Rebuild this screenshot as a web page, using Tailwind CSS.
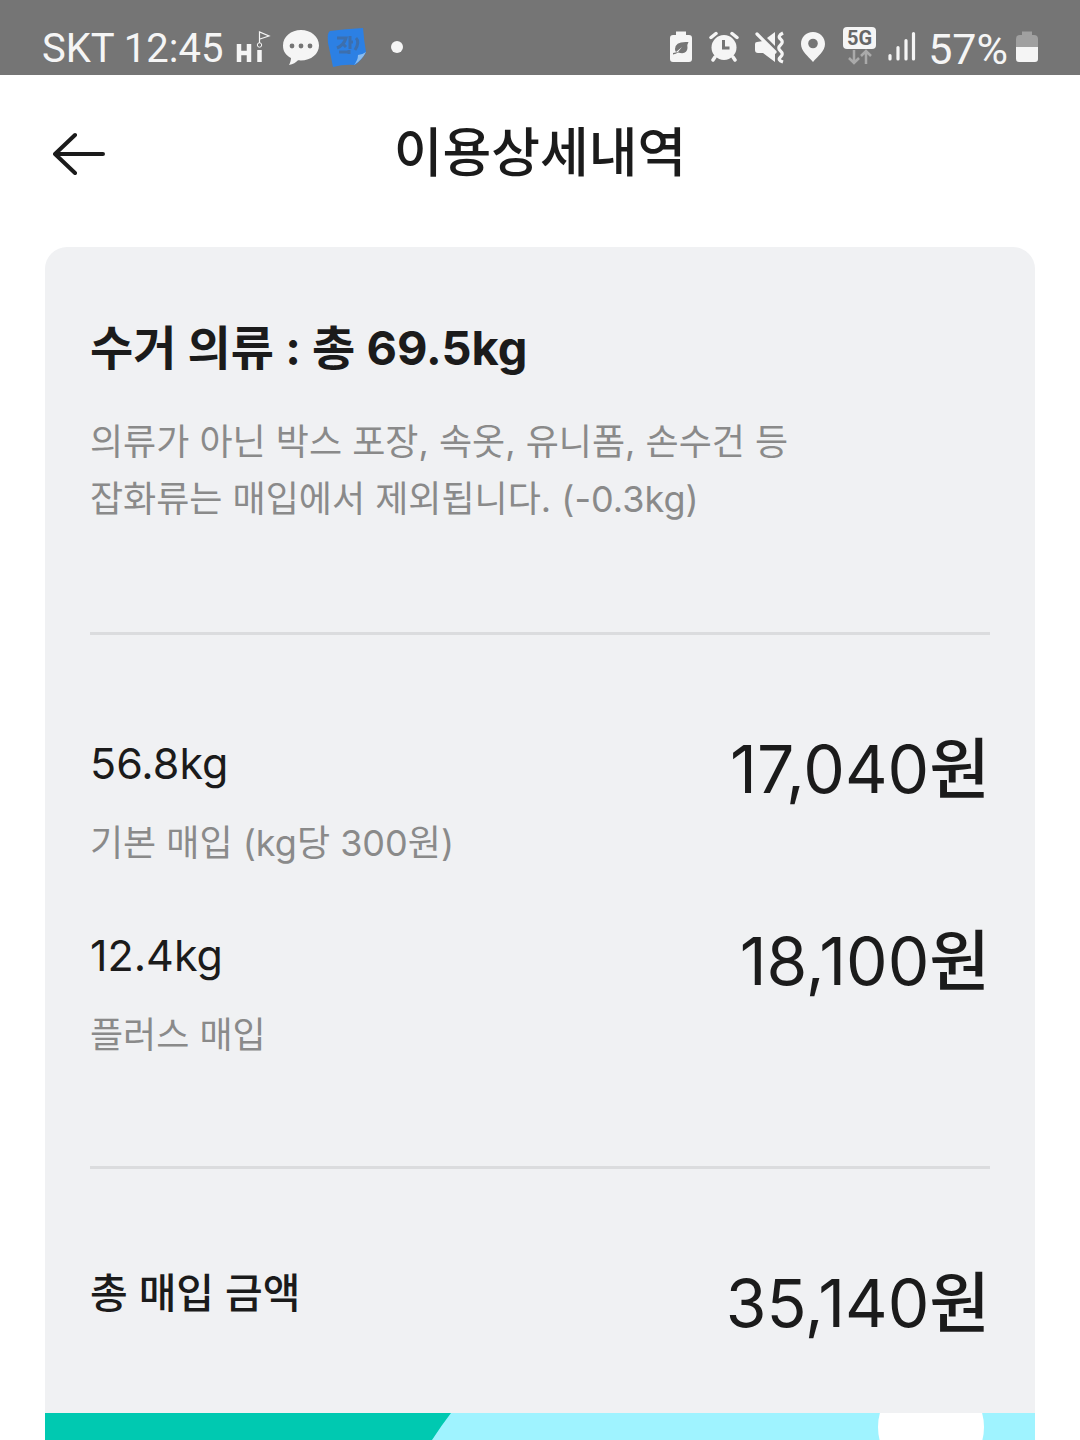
<!DOCTYPE html>
<html lang="ko">
<head>
    <meta charset="UTF-8">
    <meta name="viewport" content="width=device-width, initial-scale=1.0">
    <title>이용상세내역</title>
    <script src="https://cdn.jsdelivr.net/npm/@tailwindcss/browser@4"></script>
</head>
<body class="min-h-screen flex flex-col bg-white text-[#1b1b1b] font-['Inter','Noto_Sans_CJK_KR',sans-serif]">

    <!-- Status bar -->
    <div class="flex items-end justify-between h-[75px] px-[42px] pb-2 bg-[#757575] text-[#f5f5f5]">
        <div class="flex items-center h-10">
            <span class="pt-1 text-[40px] leading-10 font-['Roboto',sans-serif]">SKT 12:45</span>
            <svg class="ml-3 w-9 h-10" viewBox="0 0 36 40" fill="none">
                <path d="M4 17V35M14 17V35M4 26H14M24.500 23V35" stroke="#f5f5f5" stroke-width="4.500"/>
                <circle cx="24.500" cy="18" r="2.200" stroke="#f5f5f5"/>
                <path d="M24.500 16V5L34 9L25 12" stroke="#f5f5f5" stroke-width="1.200"/>
            </svg>
            <svg class="ml-3 w-9 h-10" viewBox="0 0 36 40">
                <path d="M18 3C8 3 0 9.500 0 18.500C0 24.500 3 28.500 8 31C8 33.500 7 36 6 38C10 37.500 13 35.500 15 33.300C27 34.500 36 27.500 36 18.500C36 9.500 28 3 18 3Z" fill="#f5f5f5"/>
                <circle cx="9" cy="19" r="2.400" fill="#757575"/>
                <circle cx="18" cy="19" r="2.400" fill="#757575"/>
                <circle cx="27" cy="19" r="2.400" fill="#757575"/>
            </svg>
            <svg class="ml-2 w-10 h-10" viewBox="0 0 40 40" fill="none">
                <path d="M3 4Q18 2 36 1Q37 14 39 25Q34 34 28 38Q17 37 6 40Q4 30 1 16Q0 5 3 4Z" fill="#2c80e4"/>
                <path d="M27 38Q31 33 31 28Q35 28 39 25Q35 33 27 38Z" fill="#8bbdf0"/>
                <path d="M10 11H19Q17 18 10 21M15 16L19 20M23 9V22M23 15H26M12 25H22M29 11Q33 15 28 23M22 23V27" stroke="#3c6fae" stroke-width="3"/>
            </svg>
            <span class="ml-6 size-3 rounded-full bg-[#f5f5f5]"></span>
        </div>

        <div class="flex items-center h-10">
            <svg class="w-6 h-10" viewBox="0 0 24 40">
                <path d="M7 4.500H17V8H20Q23 8 23 11V32Q23 35 20 35H4Q1 35 1 32V11Q1 8 4 8H7Z" fill="#f5f5f5"/>
                <path d="M4 27.500Q7 27 9 25.500Q18 28 18.500 21Q18 17 19.500 15Q6 14 6 22Q6 24 7 25L13 20L9 25L4 26Z" fill="#757575"/>
            </svg>
            <svg class="ml-4 w-[30px] h-10" viewBox="0 0 30 40" fill="none" stroke="#f5f5f5" stroke-linecap="round">
                <circle cx="15" cy="20.500" r="12.500" fill="#f5f5f5" stroke="none"/>
                <path d="M2 10.500L7 6.500M28 10.500L23 6.500M6 30L4 33M24 30L26 33" stroke-width="3.500"/>
                <path d="M14.500 13V21H20.500" stroke="#757575" stroke-width="3" stroke-linecap="butt"/>
            </svg>
            <svg class="ml-4 w-[30px] h-10" viewBox="0 0 30 40">
                <path d="M2 15Q0 15 0 17V23Q0 26 3 26H8L20 35V26L8 14Z" fill="#f5f5f5"/>
                <path d="M12 11L20 5V19Z" fill="#f5f5f5"/>
                <path d="M2 7L20 25" stroke="#f5f5f5" stroke-width="3.200" stroke-linecap="round"/>
                <path d="M28 6Q22 9 25.500 12T25.500 18T25.500 24T25.500 30T28 35" fill="none" stroke="#f5f5f5" stroke-width="3.200"/>
            </svg>
            <svg class="ml-4 w-6 h-10" viewBox="0 0 24 40">
                <path d="M12 5C5 5 0 10 0 17C0 24 7 29 12 35C17 29 24 24 24 17C24 10 19 5 12 5Z" fill="#f5f5f5"/>
                <circle cx="12" cy="16.500" r="4.800" fill="#757575"/>
            </svg>
            <div class="ml-[18px] flex flex-col items-center w-[33px] h-10">
                <span class="w-full h-[22px] rounded bg-[#f5f5f5] text-center text-xl leading-[22px] font-bold text-[#666] font-['Roboto',sans-serif]">5G</span>
                <svg class="w-6 h-4" viewBox="0 0 24 16" fill="none" stroke="#aaa" stroke-width="2.500">
                    <path d="M6 1V14M1 9L6 14L11 9M18 15V2M13 7L18 2L23 7"/>
                </svg>
            </div>
            <svg class="ml-3 w-7 h-10" viewBox="0 0 28 40" stroke="#f5f5f5" stroke-width="3.200" stroke-linecap="round">
                <path d="M2 28.500V32M10 20.500V32M18 13.500V32M25.500 6.500V32"/>
            </svg>
            <span class="ml-3 pt-1 text-[43px] leading-10 font-['Roboto',sans-serif]">57%</span>
            <svg class="ml-2 w-[22px] h-10" viewBox="0 0 22 40">
                <path d="M6 4.500H16V8H18Q22 8 22 12V20H0V12Q0 8 4 8H6Z" fill="#a0a0a0"/>
                <path d="M0 20H22V32Q22 35 19 35H3Q0 35 0 32Z" fill="#f5f5f5"/>
            </svg>
        </div>
    </div>

    <!-- Header -->
    <header class="grid grid-cols-[52px_1fr_52px] items-center h-[172px] px-[53px] pb-4">
        <button type="button" aria-label="뒤로" class="block">
            <svg class="w-[52px] h-11" viewBox="0 0 52 44" fill="none" stroke="#1b1b1b" stroke-width="4" stroke-linecap="round" stroke-linejoin="round">
                <path d="M22 4L2 23L22 42M2 23H50"/>
            </svg>
        </button>
        <h1 class="text-center text-[53px] leading-[60px] font-medium">이용상세내역</h1>
    </header>

    <!-- Detail card -->
    <main class="flex-1 flex flex-col mx-[45px] rounded-t-[22px] bg-[#f0f1f3] overflow-hidden">
        <div class="px-[45px] pt-[71px] pb-[70px]">
            <h2 class="text-[47px] leading-[60px] font-bold">수거 의류 : 총 69.5kg</h2>
            <p class="mt-9 text-4xl leading-[57px] text-[#8a8a8a]">의류가 아닌 박스 포장, 속옷, 유니폼, 손수건 등<br>잡화류는 매입에서 제외됩니다. (-0.3kg)</p>

            <hr class="mt-[104px] border-0 h-[3px] bg-[#dbdcde]">

            <dl class="mt-[94px] space-y-12">
                <div class="flex justify-between">
                    <dt class="pt-1">
                        <span class="block text-[43px] leading-[60px]">56.8kg</span>
                        <span class="block mt-5 text-4xl leading-[60px] text-[#8a8a8a]">기본 매입 (kg당 300원)</span>
                    </dt>
                    <dd class="text-[66px] leading-[80px]">17,040<span class="font-medium">원</span></dd>
                </div>
                <div class="flex justify-between">
                    <dt class="pt-1">
                        <span class="block text-[43px] leading-[60px]">12.4kg</span>
                        <span class="block mt-5 text-4xl leading-[60px] text-[#8a8a8a]">플러스 매입</span>
                    </dt>
                    <dd class="text-[66px] leading-[80px]">18,100<span class="font-medium">원</span></dd>
                </div>
            </dl>

            <hr class="mt-[101px] border-0 h-[3px] bg-[#dbdcde]">

            <dl class="mt-[94px] flex justify-between">
                <dt class="text-[41px] leading-[60px] font-medium">총 매입 금액</dt>
                <dd class="text-[66px] leading-[80px]">35,140<span class="font-medium">원</span></dd>
            </dl>
        </div>

        <!-- Banner -->
        <div class="flex-1 bg-[#9ff3ff]">
            <svg class="block w-full" viewBox="0 0 990 27">
                <path d="M0 0H406Q396 13 387 27H0Z" fill="#00c9b1"/>
                <circle cx="886" cy="14" r="53" fill="#fff"/>
            </svg>
        </div>
    </main>

</body>
</html>
